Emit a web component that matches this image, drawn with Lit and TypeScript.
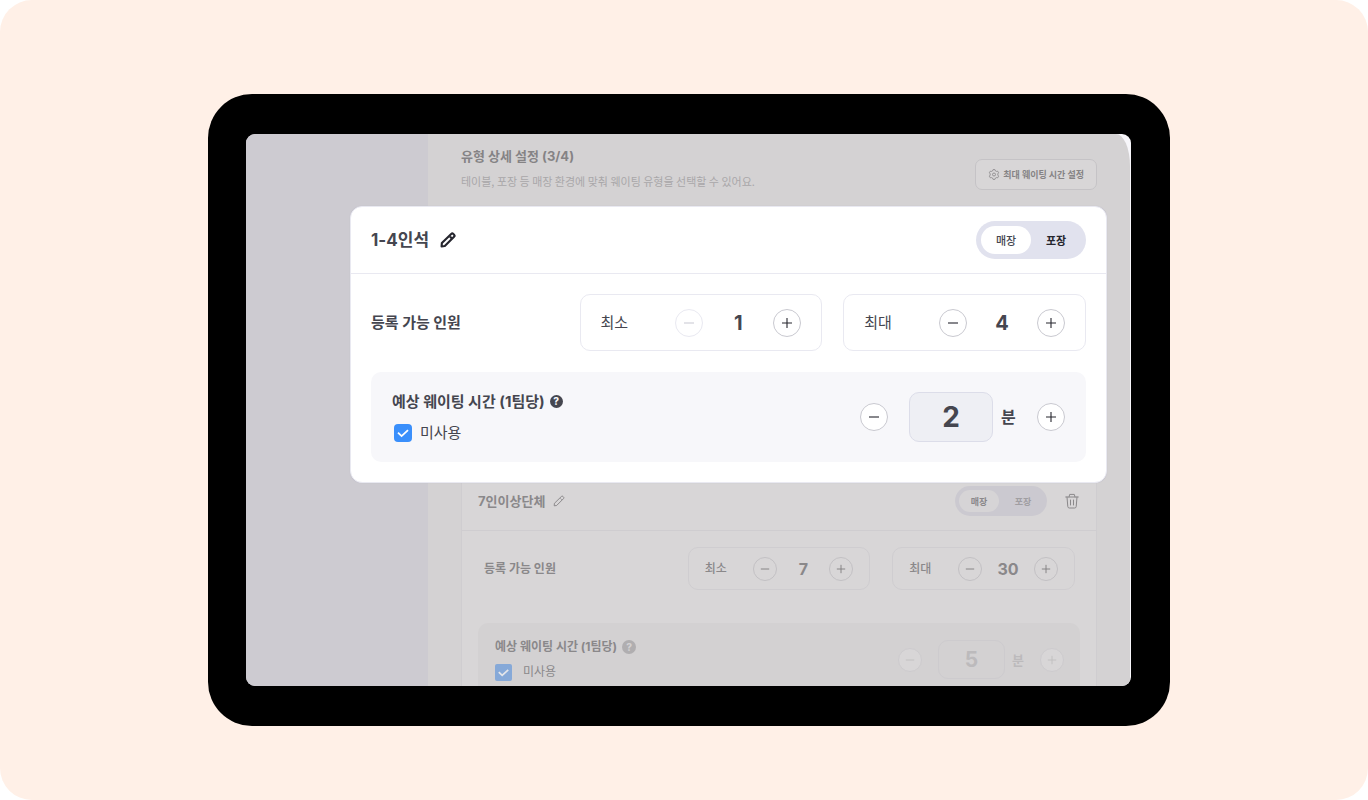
import { LitElement, html, css, svg } from "lit";
import { customElement, property } from "lit/decorators.js";
import { classMap } from "lit/directives/class-map.js";

const minus = html`<svg viewBox="0 0 12 12" aria-hidden="true"><path d="M1 6h10" /></svg>`;
const plus = html`<svg viewBox="0 0 12 12" aria-hidden="true"><path d="M1 6h10M6 1v10" /></svg>`;

const pencil = (width: number) => html`
  <svg viewBox="0 0 18 18" fill="none" stroke="currentColor" stroke-width=${width}
    stroke-linejoin="round" aria-hidden="true">
    ${svg`<path d="M1.800 16.200l.3-3.700L12.600 2.200a1.700 1.700 0 0 1 2.400 0l.8.8a1.700 1.700 0 0 1 0 2.400L5.400 15.800z" /><path d="M11.200 5.200l1.800 1.800" />`}
  </svg>`;

const gear = html`
  <svg viewBox="0 0 12 12" fill="none" stroke="currentColor" stroke-width="0.8" stroke-linejoin="round" aria-hidden="true">
    <path d="M5.100 .6h1.800l.5 1.300 .9 .5 1.400-.2 .9 1.500-.8 1.200v1.100l.8 1.200-.9 1.600-1.400-.2-.9 .5-.5 1.300H5.100l-.5-1.300-.9-.5-1.400 .2-.9-1.600 .8-1.200V4.900l-.8-1.200 .9-1.500 1.400 .2 .9-.5z" />
    <circle cx="6" cy="5.500" r="1.500" />
  </svg>`;

const trash = html`
  <svg viewBox="0 0 14 16" fill="none" stroke="currentColor" stroke-width="1" stroke-linecap="round" stroke-linejoin="round" aria-hidden="true">
    <path d="M.7 4h12.600M4 4l.7-2.600h4.600L10 4M2 4l.8 9.600c.1.900.6 1.400 1.500 1.400h5.400c.9 0 1.400-.5 1.500-1.400L12 4M5.500 7v5M8.500 7v5" />
  </svg>`;

const check = html`
  <svg viewBox="0 0 18 18" fill="none" stroke="currentColor" stroke-width="1.800" aria-hidden="true">
    <path d="M4 8.600l3.600 3.500 6.400-6" />
  </svg>`;

@customElement("seat-card")
export class SeatCard extends LitElement {
  static styles = css`
    :host {
      display: block;
      --ink: #45464f;
      --icon: #26262e;
      --line: #e9e9f1;
      --track: #e1e2ee;
      --pill: #ffffff;
      --panel: #f7f7fa;
      --ring: #c9c9d0;
      --face: #ffffff;
      --accent: #3a8ffb;
      --off: #cdcdd6;
    }
    * { box-sizing: border-box; }
    button, input { font: inherit; color: inherit; margin: 0; padding: 0; }
    button { border: 0; background: none; }
    svg { display: block; }

    .card {
      border: 1px solid var(--line);
      border-radius: 12px;
      background: #fff;
      color: var(--ink);
      box-shadow: 0 0 1px #b9b7c4;
    }
    .head {
      display: flex;
      align-items: center;
      height: 67px;
      padding: 0 20px;
      border-bottom: 1px solid var(--line);
    }
    .name { margin: 0; font-size: 17px; line-height: 24px; font-weight: 700; }
    .edit { margin-left: 11px; color: var(--icon); }
    .edit svg { width: 16px; height: 16px; }
    .toggle {
      display: flex;
      margin-left: auto;
      padding: 5px;
      height: 38px;
      border-radius: 19px;
      background: var(--track);
      font-size: 11px;
      font-weight: 500;
    }
    .option { width: 50px; border-radius: 14px; }
    .option.on { background: var(--pill); }
    .option.strong { font-weight: 700; color: var(--icon); }
    .trash { margin-left: 18px; color: #8a888a; }
    .trash svg { width: 14px; height: 16px; }

    .body { display: grid; gap: 21px; padding: 20px; }
    .row { display: grid; grid-template-columns: 187fr 242fr 242fr; column-gap: 21px; align-items: center; }
    .label { font-size: 15px; line-height: 20px; font-weight: 700; white-space: nowrap; }
    .counter {
      display: flex;
      align-items: center;
      justify-content: space-between;
      height: 57px;
      padding: 0 20px;
      border: 1px solid var(--line);
      border-radius: 10px;
      font-size: 15px;
      line-height: 20px;
    }
    .stepper { display: flex; align-items: center; }
    .round {
      display: grid;
      place-items: center;
      width: 28px;
      height: 28px;
      border: 1px solid var(--ring);
      border-radius: 50%;
      background: var(--face);
      color: var(--icon);
    }
    .round svg { width: 12px; height: 12px; stroke: currentColor; stroke-width: 1.100; }
    .round:disabled { border-color: var(--line); color: var(--off); }
    .count { width: 70px; text-align: center; font-size: 20px; line-height: 24px; font-weight: 700; }

    .panel {
      display: flex;
      align-items: center;
      justify-content: space-between;
      height: 90px;
      padding: 0 21px;
      border-radius: 10px;
      background: var(--panel);
    }
    .wait { display: grid; gap: 11px; }
    .title { display: flex; align-items: center; gap: 5px; }
    .help {
      display: grid;
      place-items: center;
      width: 13px;
      height: 13px;
      border-radius: 50%;
      background: var(--ink);
      color: var(--panel);
      font-size: 10px;
      line-height: 13px;
      font-weight: 800;
    }
    .tick { display: flex; align-items: center; gap: 8px; padding-left: 2px; font-size: 15px; line-height: 20px; }
    .box { display: grid; color: #fff; }
    .box > * { grid-area: 1 / 1; width: 18px; height: 18px; }
    .box input { appearance: none; border-radius: 4px; background: var(--accent); }
    .box svg { pointer-events: none; z-index: 1; }
    .minutes {
      width: 84px;
      height: 50px;
      margin: 0 8px 0 21px;
      border: 1px solid #dcdde9;
      border-radius: 10px;
      background: #eeeff4;
      text-align: center;
      font-size: 28px;
      font-weight: 700;
    }
    .unit { width: 15px; margin-right: 21px; font-size: 16px; line-height: 20px; font-weight: 700; white-space: nowrap; }

    .compact {
      --ink: #8a888a;
      --icon: #7f7d80;
      --line: #cfcdd0;
      --track: #cbc9d0;
      --pill: #d6d4d6;
      --panel: #d3d1d2;
      --ring: #c3c1c4;
      --face: #d8d6d7;
      --accent: #86a9d8;
      --off: #c3c1c4;
      border-width: 0 1px;
      border-radius: 0;
      background: #d8d6d7;
      box-shadow: none;
    }
    .compact .head { height: 48px; padding: 0 17px 11px 16px; }
    .compact .name { font-size: 13px; line-height: 20px; }
    .compact .edit { margin-left: 8px; }
    .compact .edit svg { width: 12px; height: 12px; }
    .compact .toggle { gap: 4px; height: 30px; padding: 4px; font-size: 9px; }
    .compact .option { width: 40px; }
    .compact .option.on { font-weight: 700; }
    .compact .option.strong { font-weight: 700; color: #a09ea2; }
    .compact .body { gap: 33px; padding: 16px 16px 0; }
    .compact .row { grid-template-columns: 181fr 182fr 182fr; column-gap: 22px; padding: 0 5px 0 6px; }
    .compact .label, .compact .counter, .compact .tick { font-size: 12px; }
    .compact .counter { height: 43px; padding: 0 16px; font-weight: 500; }
    .compact .round { width: 24px; height: 24px; }
    .compact .round svg { width: 10px; height: 10px; }
    .compact .count { width: 52px; font-size: 16px; }
    .compact .panel { height: 90px; padding: 3px 16px 20px 17px; }
    .compact .wait { gap: 5px; }
    .compact .help { width: 14px; height: 14px; background: #b0aeb0; color: #d3d1d2; }
    .compact .tick { gap: 11px; padding-left: 0; }
    .compact .box { color: #e4e6ea; }
    .compact .box > * { width: 17px; height: 17px; }
    .compact .box input { border-radius: 2px; }
    .compact .minutes {
      width: 67px;
      height: 39px;
      margin: 0 7px 0 16px;
      border-color: #cdcbce;
      background: none;
      font-size: 21px;
      color: #bcbabc;
    }
    .compact .unit { width: 12px; margin-right: 16px; font-size: 13px; color: #bcbabc; }
    .compact .panel .round { border-color: #cdcbce; color: #c0bec0; }
  `;

  @property() name = "";
  @property({ type: Number }) min = 1;
  @property({ type: Number }) max = 1;
  @property({ type: Number }) minutes = 1;
  @property({ type: Boolean }) compact = false;

  private counter(label: string, value: number) {
    return html`
      <div class="counter" role="group" aria-label=${label}>
        <span>${label}</span>
        <div class="stepper">
          <button class="round" aria-label="${label} 감소" ?disabled=${value <= 1}>${minus}</button>
          <output class="count">${value}</output>
          <button class="round" aria-label="${label} 증가">${plus}</button>
        </div>
      </div>`;
  }

  render() {
    return html`
      <section class=${classMap({ card: true, compact: this.compact })}>
        <header class="head">
          <h2 class="name">${this.name}</h2>
          <button class="edit" aria-label="이름 수정">${pencil(this.compact ? 1.3 : 2.4)}</button>
          <div class="toggle">
            <button class="option on" aria-pressed="true">매장</button>
            <button class="option strong" aria-pressed="false">포장</button>
          </div>
          ${this.compact ? html`<button class="trash" aria-label="삭제">${trash}</button>` : null}
        </header>
        <div class="body">
          <div class="row">
            <span class="label">등록 가능 인원</span>
            ${this.counter("최소", this.min)} ${this.counter("최대", this.max)}
          </div>
          <div class="panel">
            <div class="wait">
              <div class="title">
                <label class="label" for="minutes">예상 웨이팅 시간 (1팀당)</label>
                <span class="help">?</span>
              </div>
              <label class="tick">
                <span class="box"><input type="checkbox" checked />${check}</span>
                미사용
              </label>
            </div>
            <div class="stepper">
              <button class="round" aria-label="시간 감소">${minus}</button>
              <input class="minutes" id="minutes" type="text" inputmode="numeric" .value=${String(this.minutes)} />
              <span class="unit">분</span>
              <button class="round" aria-label="시간 증가">${plus}</button>
            </div>
          </div>
        </div>
      </section>`;
  }
}

@customElement("app-root")
export class AppRoot extends LitElement {
  static styles = css`
    :host {
      display: block;
      background: #fff;
      font-family: Inter, "Noto Sans CJK KR", sans-serif;
    }
    * { box-sizing: border-box; }
    .stage {
      display: flex;
      height: 100vh;
      padding: 94px 198px 74px 208px;
      border-radius: 32px;
      background: #fff0e7;
    }
    .tablet {
      display: flex;
      flex: 1;
      min-width: 0;
      padding: 40px 39px 40px 38px;
      border-radius: 44px;
      background: #000;
    }
    .screen {
      display: flex;
      flex: 1;
      min-width: 0;
      overflow: hidden;
      border-radius: 9px;
      background: linear-gradient(to right, #cdcbd1 50%, #f7f6fa 50%);
      padding-right: 1px;
    }
    .side { flex: 0 0 182px; background: #cdcbd1; }
    .main {
      flex: 1;
      min-width: 0;
      padding: 0 33px;
      border-top-right-radius: 14px 32px;
      background: #d4d2d3;
    }
    .intro { display: flex; justify-content: space-between; height: 72px; padding-top: 12px; }
    .heading { margin: 0 0 7px; font-size: 13px; line-height: 20px; font-weight: 700; color: #858385; }
    .sub, .setting { font-family: "Noto Sans CJK KR", sans-serif; }
    .sub { margin: 0; font-size: 11px; line-height: 16px; color: #a9a7a9; white-space: nowrap; }
    .setting {
      display: flex;
      align-items: center;
      gap: 3px;
      height: 31px;
      margin-top: 13px;
      padding: 0 12px;
      border: 1px solid #c5c3c6;
      border-radius: 7px;
      background: #d8d6d7;
      color: #858385;
      font-size: 9px;
      line-height: 12px;
      font-weight: 700;
      white-space: nowrap;
    }
    .setting svg { display: block; width: 12px; height: 12px; }
    .focus { margin: 0 -10px 0 -111px; position: relative; }
  `;

  render() {
    return html`
      <div class="stage">
        <div class="tablet">
          <div class="screen">
            <aside class="side"></aside>
            <main class="main">
              <header class="intro">
                <div>
                  <h1 class="heading">유형 상세 설정 (3/4)</h1>
                  <p class="sub">테이블, 포장 등 매장 환경에 맞춰 웨이팅 유형을 선택할 수 있어요.</p>
                </div>
                <button class="setting">${gear}최대 웨이팅 시간 설정</button>
              </header>
              <seat-card class="focus" name="1-4인석" .min=${1} .max=${4} .minutes=${2}></seat-card>
              <seat-card name="7인이상단체" .min=${7} .max=${30} .minutes=${5} compact></seat-card>
            </main>
          </div>
        </div>
      </div>`;
  }
}
